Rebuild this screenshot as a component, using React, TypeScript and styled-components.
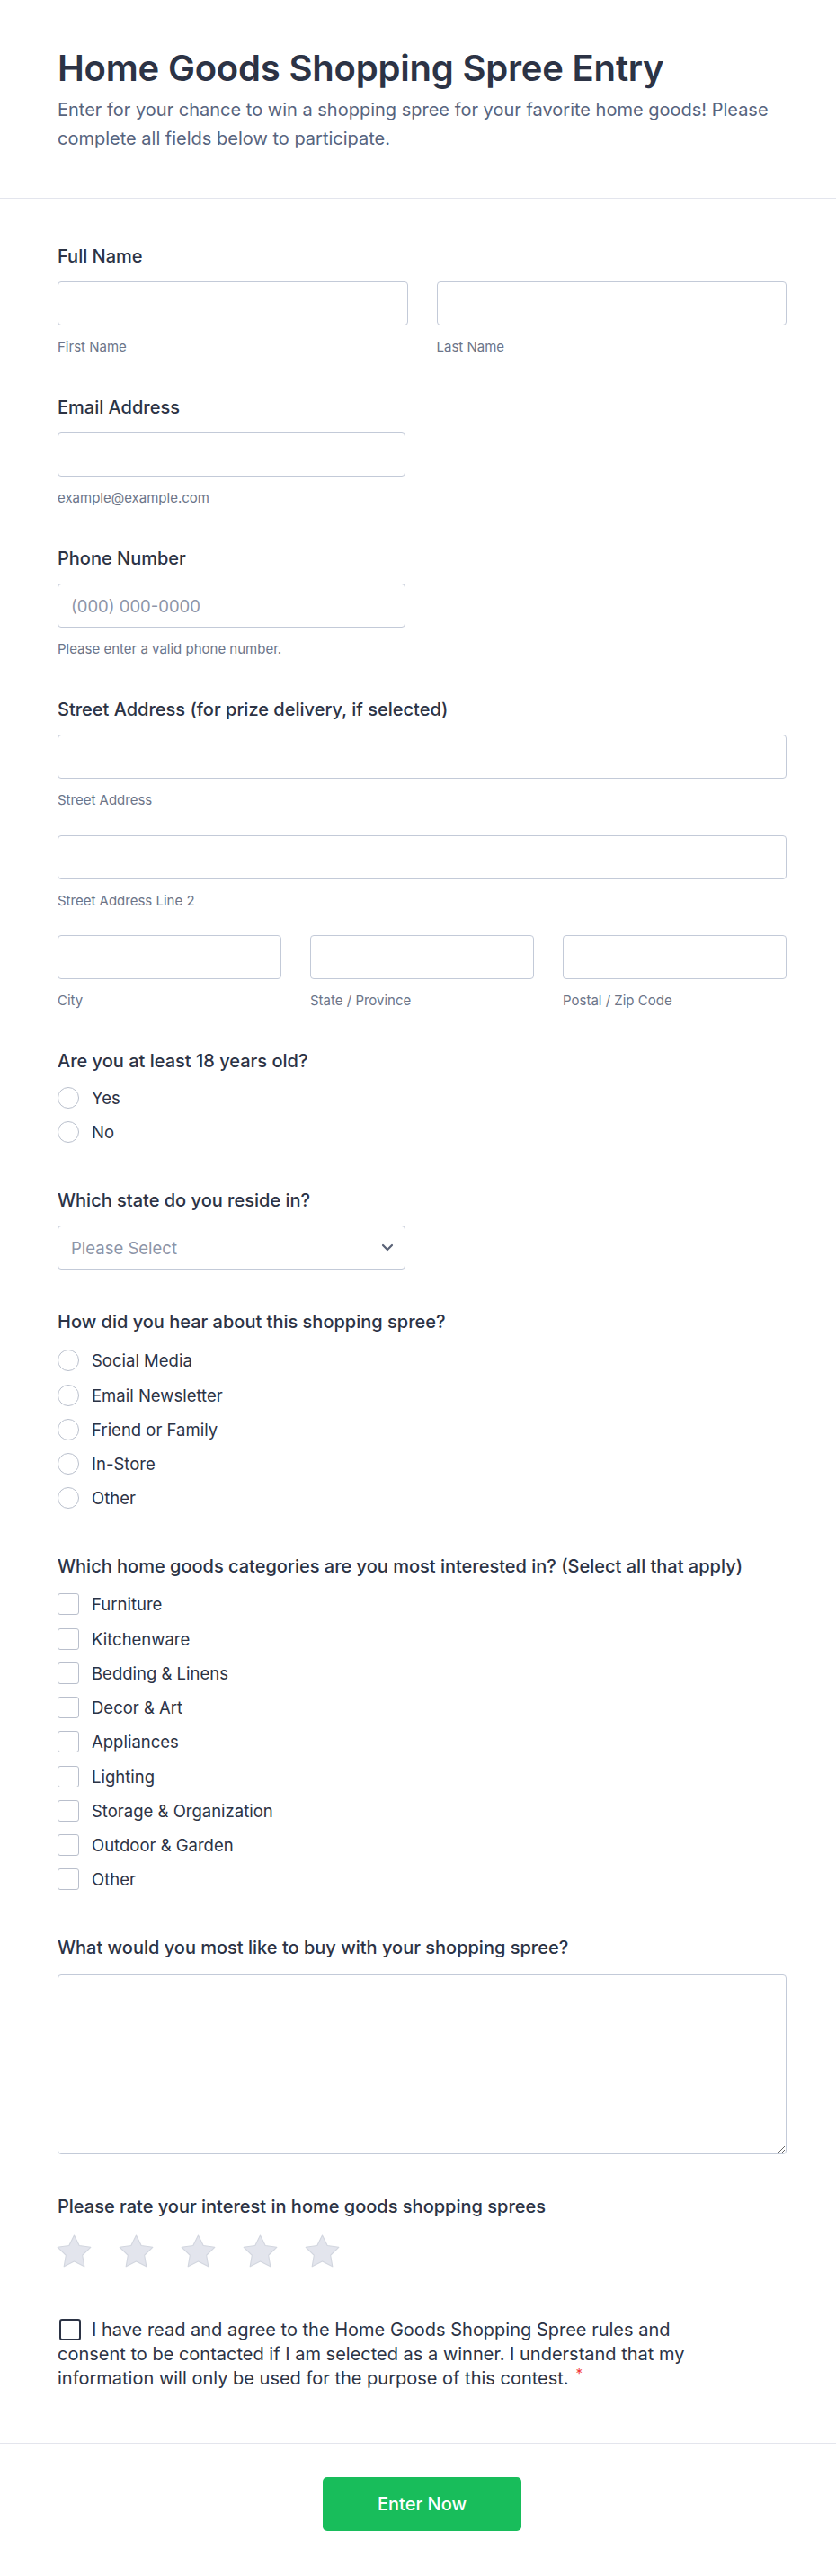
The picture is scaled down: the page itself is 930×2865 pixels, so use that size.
import React from 'react';
import styled, { createGlobalStyle } from 'styled-components';

const GlobalStyle = createGlobalStyle`
  * { box-sizing: border-box; }
  body {
    margin: 0;
    background: #ffffff;
    font-family: Inter, "Noto Sans", Arial, sans-serif;
    color: #2c3345;
  }
`;

const Page = styled.div`
  width: 930px;
  background: #ffffff;
`;

const Header = styled.header`
  padding: 52px 55px 50px 64px;
  border-bottom: 1px solid #e3e5ed;
`;

const Title = styled.h1`
  margin: 0;
  font-size: 40px;
  line-height: 48px;
  font-weight: 600;
  color: #2c3345;
  letter-spacing: -0.2px;
`;

const Subtitle = styled.p`
  margin: 6px 0 0;
  font-size: 20px;
  line-height: 32px;
  color: #57647e;
`;

const Body = styled.form`
  padding: 51px 55px 58px 64px;
`;

const Field = styled.div<{ $space?: number }>`
  margin-bottom: ${({ $space }) => ($space ?? 44)}px;
`;

const Label = styled.div<{ $gap?: number }>`
  font-size: 20px;
  line-height: 26px;
  font-weight: 500;
  color: #2c3345;
  margin-bottom: ${({ $gap }) => ($gap ?? 15)}px;
`;

const Row = styled.div<{ $cols: number }>`
  display: grid;
  grid-template-columns: repeat(${({ $cols }) => $cols}, 1fr);
  column-gap: 32px;
`;

const Half = styled.div`
  width: 387px;
`;

const Part = styled.div<{ $space: number }>`
  margin-bottom: ${({ $space }) => $space}px;
`;

const Input = styled.input`
  display: block;
  width: 100%;
  height: 49px;
  padding: 0 14px;
  border: 1px solid #c3cad8;
  border-radius: 4px;
  background: #fff;
  font-family: inherit;
  font-size: 18.5px;
  color: #2c3345;
  outline: none;

  &::placeholder {
    color: #8d95a8;
  }
`;

const SubLabel = styled.div`
  margin-top: 14px;
  font-size: 15px;
  line-height: 20px;
  color: #6c7589;
`;

const SelectBox = styled.div`
  display: flex;
  align-items: center;
  width: 387px;
  height: 49px;
  padding: 0 12px 0 14px;
  border: 1px solid #c3cad8;
  border-radius: 4px;
  background: #fff;
`;

const SelectText = styled.span`
  flex: 1;
  font-size: 18.5px;
  color: #8d95a8;
`;

const Options = styled.div`
  display: flex;
  flex-direction: column;
  gap: 14.25px;
  padding-bottom: 7px;
`;

const Option = styled.label`
  display: flex;
  align-items: center;
  gap: 14px;
  height: 24px;
  font-size: 18.5px;
  color: #2c3345;
`;

const Mark = styled.input<{ $round?: boolean }>`
  appearance: none;
  margin: 0;
  flex: none;
  width: 24px;
  height: 24px;
  border: 1px solid #b9bfcc;
  border-radius: ${({ $round }) => ($round ? '50%' : '3px')};
  background: #fff;
`;

const TextArea = styled.textarea`
  display: block;
  width: 100%;
  height: 200px;
  padding: 12px 14px;
  border: 1px solid #c3cad8;
  border-radius: 4px;
  font-family: inherit;
  font-size: 18.5px;
  outline: none;
`;

const Stars = styled.div`
  display: flex;
  gap: 32px;
  height: 36px;
  align-items: center;
`;

const Consent = styled.p`
  margin: 0;
  max-width: 720px;
  font-size: 20px;
  line-height: 27px;
  color: #2c3345;
`;

const ConsentBox = styled.input`
  appearance: none;
  display: inline-block;
  vertical-align: middle;
  margin: -3px 12px 0 2px;
  width: 24px;
  height: 24px;
  border: 2px solid #2c3345;
  border-radius: 3px;
  background: #fff;
`;

const Required = styled.sup`
  color: #f23a3c;
  font-size: 15px;
  line-height: 0;
  margin-left: 8px;
`;

const Footer = styled.div`
  display: flex;
  justify-content: center;
  padding: 37px 55px 49px 64px;
  border-top: 1px solid #e3e5ed;
`;

const SubmitButton = styled.button`
  width: 221px;
  height: 60px;
  border: none;
  border-radius: 5px;
  background: #18bd5b;
  color: #fff;
  font-family: inherit;
  font-size: 20px;
  font-weight: 500;
  cursor: pointer;
`;

function Star() {
  return (
    <svg width="37" height="35" viewBox="2 2 20 19.1" overflow="visible">
      <polygon
        points="12,2 15.09,8.26 22,9.27 17,14.14 18.18,21.02 12,17.77 5.82,21.02 7,14.14 2,9.27 8.91,8.26"
        fill="#e3e5ed"
        stroke="#d2d6df"
        strokeWidth="0.6"
        strokeLinejoin="round"
      />
    </svg>
  );
}

function Chevron() {
  return (
    <svg width="14" height="9" viewBox="0 0 14 9">
      <path d="M2 2l5 5 5-5" fill="none" stroke="#5a6377" strokeWidth="2.2" strokeLinecap="round" strokeLinejoin="round" />
    </svg>
  );
}

const heardFrom = ['Social Media', 'Email Newsletter', 'Friend or Family', 'In-Store', 'Other'];
const categories = [
  'Furniture',
  'Kitchenware',
  'Bedding & Linens',
  'Decor & Art',
  'Appliances',
  'Lighting',
  'Storage & Organization',
  'Outdoor & Garden',
  'Other',
];

export default function App() {
  return (
    <Page>
      <GlobalStyle />
      <Header>
        <Title>Home Goods Shopping Spree Entry</Title>
        <Subtitle>
          Enter for your chance to win a shopping spree for your favorite home goods! Please complete all fields
          below to participate.
        </Subtitle>
      </Header>

      <Body onSubmit={(e) => e.preventDefault()}>
        <Field>
          <Label>Full Name</Label>
          <Row $cols={2}>
            <div>
              <Input />
              <SubLabel>First Name</SubLabel>
            </div>
            <div>
              <Input />
              <SubLabel>Last Name</SubLabel>
            </div>
          </Row>
        </Field>

        <Field>
          <Label>Email Address</Label>
          <Half>
            <Input type="email" />
            <SubLabel>example@example.com</SubLabel>
          </Half>
        </Field>

        <Field>
          <Label>Phone Number</Label>
          <Half>
            <Input placeholder="(000) 000-0000" />
            <SubLabel>Please enter a valid phone number.</SubLabel>
          </Half>
        </Field>

        <Field>
          <Label>Street Address (for prize delivery, if selected)</Label>
          <Part $space={29}>
            <Input />
            <SubLabel>Street Address</SubLabel>
          </Part>
          <Part $space={28}>
            <Input />
            <SubLabel>Street Address Line 2</SubLabel>
          </Part>
          <Row $cols={3}>
            <div>
              <Input />
              <SubLabel>City</SubLabel>
            </div>
            <div>
              <Input />
              <SubLabel>State / Province</SubLabel>
            </div>
            <div>
              <Input />
              <SubLabel>Postal / Zip Code</SubLabel>
            </div>
          </Row>
        </Field>

        <Field>
          <Label $gap={16}>Are you at least 18 years old?</Label>
          <Options>
            <Option>
              <Mark type="radio" name="age" $round />
              Yes
            </Option>
            <Option>
              <Mark type="radio" name="age" $round />
              No
            </Option>
          </Options>
        </Field>

        <Field $space={45}>
          <Label>Which state do you reside in?</Label>
          <SelectBox>
            <SelectText>Please Select</SelectText>
            <Chevron />
          </SelectBox>
        </Field>

        <Field>
          <Label $gap={18}>How did you hear about this shopping spree?</Label>
          <Options>
            {heardFrom.map((item) => (
              <Option key={item}>
                <Mark type="radio" name="heard" $round />
                {item}
              </Option>
            ))}
          </Options>
        </Field>

        <Field>
          <Label $gap={17}>Which home goods categories are you most interested in? (Select all that apply)</Label>
          <Options>
            {categories.map((item) => (
              <Option key={item}>
                <Mark type="checkbox" />
                {item}
              </Option>
            ))}
          </Options>
        </Field>

        <Field $space={45}>
          <Label $gap={17}>What would you most like to buy with your shopping spree?</Label>
          <TextArea />
        </Field>

        <Field $space={57}>
          <Label $gap={18}>Please rate your interest in home goods shopping sprees</Label>
          <Stars>
            {[1, 2, 3, 4, 5].map((n) => (
              <Star key={n} />
            ))}
          </Stars>
        </Field>

        <Consent>
          <ConsentBox type="checkbox" />
          I have read and agree to the Home Goods Shopping Spree rules and consent to be contacted if I am selected
          as a winner. I understand that my information will only be used for the purpose of this contest.
          <Required>*</Required>
        </Consent>
      </Body>

      <Footer>
        <SubmitButton type="submit">Enter Now</SubmitButton>
      </Footer>
    </Page>
  );
}
